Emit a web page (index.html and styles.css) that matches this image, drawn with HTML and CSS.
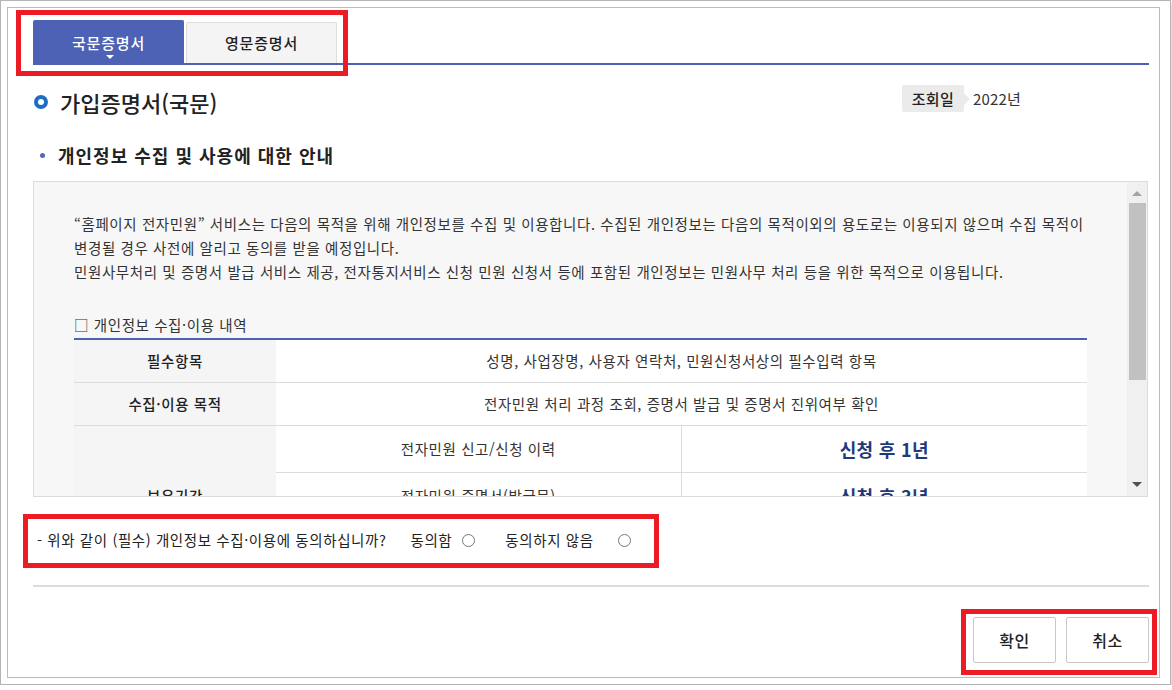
FILE: index.html
```html
<!DOCTYPE html>
<html lang="ko">

<head>
    <meta charset="UTF-8">
    <meta name="viewport" content="width=device-width, initial-scale=1.0">
    <title>가입증명서</title>
    <link rel="stylesheet" href="styles.css">
</head>

<body>
    <div class="dialog">
        <div class="panel">
            <!-- 탭 -->
            <ul class="tabs">
                <li class="tab on">국문증명서</li>
                <li class="tab">영문증명서</li>
            </ul>

            <div class="title-row">
                <h2 class="doc-title"><span class="ring"></span>가입증명서(국문)</h2>
                <div class="query-date">
                    <span class="label">조회일</span>
                    <span class="value">2022년</span>
                </div>
            </div>

            <h3 class="sub-title">개인정보 수집 및 사용에 대한 안내</h3>

            <div class="scroll-box">
                <div class="scroll-inner">
                    <p class="desc">
                        “홈페이지 전자민원” 서비스는 다음의 목적을 위해 개인정보를 수집 및 이용합니다. 수집된 개인정보는 다음의 목적이외의 용도로는 이용되지 않으며 수집 목적이<br>
                        변경될 경우 사전에 알리고 동의를 받을 예정입니다.<br>
                        민원사무처리 및 증명서 발급 서비스 제공, 전자통지서비스 신청 민원 신청서 등에 포함된 개인정보는 민원사무 처리 등을 위한 목적으로 이용됩니다.
                    </p>
                    <p class="tbl-cap">□ 개인정보 수집·이용 내역</p>
                    <table class="info-tbl">
                        <colgroup>
                            <col class="c1">
                            <col class="c2">
                            <col class="c3">
                        </colgroup>
                        <tbody>
                            <tr>
                                <th>필수항목</th>
                                <td colspan="2">성명, 사업장명, 사용자 연락처, 민원신청서상의 필수입력 항목</td>
                            </tr>
                            <tr>
                                <th>수집·이용 목적</th>
                                <td colspan="2">전자민원 처리 과정 조회, 증명서 발급 및 증명서 진위여부 확인</td>
                            </tr>
                            <tr class="tall">
                                <th rowspan="3">보유기간</th>
                                <td>전자민원 신고/신청 이력</td>
                                <td class="period">신청 후 1년</td>
                            </tr>
                            <tr class="tall">
                                <td>전자민원 증명서(발급문)</td>
                                <td class="period">신청 후 3년</td>
                            </tr>
                            <tr class="tall">
                                <td>전자민원 처리 결과</td>
                                <td class="period">신청 후 5년</td>
                            </tr>
                        </tbody>
                    </table>
                </div>
                <div class="scrollbar">
                    <span class="arrow up"></span>
                    <span class="thumb"></span>
                    <span class="arrow down"></span>
                </div>
            </div>

            <div class="agree-row">
                <span class="question">- 위와 같이 (필수) 개인정보 수집·이용에 동의하십니까?</span>
                <label class="opt">동의함 <span class="radio"></span></label>
                <label class="opt opt-no">동의하지 않음 <span class="radio"></span></label>
            </div>

            <div class="line"></div>

            <div class="btns">
                <button class="btn">확인</button>
                <button class="btn">취소</button>
            </div>
        </div>

        <!-- 강조 표시 -->
        <span class="mark mark-tabs"></span>
        <span class="mark mark-agree"></span>
        <span class="mark mark-btns"></span>
    </div>
</body>

</html>
```

FILE: styles.css
```css
* {
    margin: 0;
    padding: 0;
    box-sizing: border-box;
}

body {
    font-family: "Noto Sans CJK KR", "Noto Sans", sans-serif;
    font-size: 14.5px;
    letter-spacing: 0.6px;
    color: #333;
    background: #fff;
}

ul {
    list-style: none;
}

.dialog {
    position: relative;
    width: 1171px;
    height: 685px;
    padding: 6px 10px 6px 6px;
    border: 1px solid #b4b4b4;
    background: #fff;
    box-shadow: 2px 3px 5px rgba(0, 0, 0, 0.18);
}

.panel {
    height: 100%;
    padding: 12px 10px 0 25px;
    border: 1px solid #bcbcbc;
}

/* 탭 */
.tabs {
    display: flex;
    gap: 2px;
    height: 45px;
    border-bottom: 2px solid #4d62b4;
    align-items: flex-end;
}

.tab {
    position: relative;
    width: 151px;
    height: 41px;
    display: flex;
    align-items: center;
    justify-content: center;
    padding-bottom: 2px;
    font-size: 15px;
    font-weight: 500;
    letter-spacing: 0.8px;
    color: #222;
    background: #f4f4f4;
    border: 1px solid #dcdcdc;
    border-bottom: 0;
    border-radius: 2px 2px 0 0;
}

.tab.on {
    height: 43px;
    color: #fff;
    background: #4d62b4;
    border-color: #4d62b4;
    padding-bottom: 0;
}

.tab.on::after {
    content: '';
    position: absolute;
    left: 72px;
    bottom: 4px;
    border-top: 4px solid #fff;
    border-left: 4px solid transparent;
    border-right: 4px solid transparent;
}

/* 제목 */
.title-row {
    display: flex;
    align-items: flex-start;
    padding-top: 20px;
}

.doc-title {
    display: flex;
    align-items: center;
    margin-top: 2px;
    font-size: 22px;
    line-height: 30px;
    font-weight: 500;
    letter-spacing: 0;
    color: #222;
}

.ring {
    flex-shrink: 0;
    width: 14px;
    height: 14px;
    margin: 0 12px 0 1px;
    border: 4px solid #1b6ec4;
    border-radius: 50%;
}

.query-date {
    display: flex;
    align-items: center;
    margin-left: auto;
    margin-right: 128px;
}

.query-date .label {
    position: relative;
    width: 62px;
    height: 27px;
    line-height: 27px;
    text-align: center;
    font-size: 15px;
    font-weight: 500;
    letter-spacing: 0.3px;
    color: #222;
    background: #ebebeb;
    border-radius: 2px;
}

.query-date .label::after {
    content: '';
    position: absolute;
    right: -6px;
    top: 8px;
    border-left: 6px solid #ebebeb;
    border-top: 6px solid transparent;
    border-bottom: 6px solid transparent;
}

.query-date .value {
    margin-left: 9px;
    font-size: 15px;
    letter-spacing: 0.2px;
    color: #333;
}

.sub-title {
    display: flex;
    align-items: center;
    margin-top: 25px;
    padding-left: 7px;
    font-size: 18px;
    line-height: 26px;
    font-weight: bold;
    letter-spacing: 1px;
    color: #222;
}

.sub-title::before {
    content: '';
    width: 5px;
    height: 5px;
    margin-right: 13px;
    border-radius: 50%;
    background: #5569b8;
}

/* 스크롤 박스 */
.scroll-box {
    display: flex;
    height: 316px;
    margin-top: 13px;
    margin-right: 1px;
    border: 1px solid #dcdcdc;
    background: #f7f7f7;
    overflow: hidden;
}

.scroll-inner {
    flex: 1;
    padding: 30px 40px 0 40px;
    overflow: hidden;
}

.desc {
    line-height: 24px;
    white-space: nowrap;
}

.tbl-cap {
    margin-top: 30px;
    line-height: 22px;
}

.info-tbl {
    width: 100%;
    margin-top: 2px;
    border-collapse: collapse;
    border-top: 2px solid #4d62b4;
    text-align: center;
}

.info-tbl .c1 {
    width: 202px;
}

.info-tbl .c2 {
    width: 405px;
}

.info-tbl th,
.info-tbl td {
    height: 43px;
    border-bottom: 1px solid #dcdcdc;
}

.info-tbl th {
    font-weight: 500;
    color: #222;
    background: #f5f5f5;
}

.info-tbl td {
    background: #fff;
}

.info-tbl tr.tall td {
    height: 47px;
}

.info-tbl td+td {
    border-left: 1px solid #dcdcdc;
}

.info-tbl td.period {
    font-size: 18px;
    font-weight: bold;
    letter-spacing: 0.3px;
    color: #1f3a7a;
}

.scrollbar {
    display: flex;
    flex-direction: column;
    align-items: center;
    width: 20px;
    background: #f0f0f0;
}

.arrow {
    width: 0;
    height: 0;
    border-left: 5px solid transparent;
    border-right: 5px solid transparent;
}

.arrow.up {
    margin-top: 9px;
    border-bottom: 5px solid #a3a3a3;
}

.arrow.down {
    margin-top: auto;
    margin-bottom: 9px;
    border-top: 5px solid #505050;
}

.thumb {
    width: 17px;
    height: 177px;
    margin-top: 7px;
    background: #c1c1c1;
}

/* 동의 */
.agree-row {
    display: flex;
    align-items: center;
    margin-top: 33px;
    padding-left: 4px;
    line-height: 20px;
    color: #222;
}

.opt {
    display: flex;
    align-items: center;
    margin-left: 24px;
}

.opt-no {
    margin-left: 30px;
}

.radio {
    width: 13px;
    height: 13px;
    margin-left: 10px;
    border: 1px solid #777;
    border-radius: 50%;
    background: #fff;
}

.opt-no .radio {
    margin-left: 24px;
}

.line {
    margin-top: 35px;
    border-top: 2px solid #dcdcdc;
}

.btns {
    display: flex;
    justify-content: flex-end;
    gap: 10px;
    margin-top: 30px;
}

.btn {
    width: 83px;
    height: 46px;
    font-family: inherit;
    font-size: 16px;
    font-weight: 500;
    letter-spacing: 0.5px;
    color: #222;
    background: #fff;
    border: 1px solid #c8c8c8;
    border-radius: 2px;
}

/* 빨간 강조 박스 */
.mark {
    position: absolute;
    border: 5px solid #ed1c24;
}

.mark-tabs {
    left: 15px;
    top: 9px;
    width: 332px;
    height: 66px;
}

.mark-agree {
    left: 22px;
    top: 513px;
    width: 636px;
    height: 54px;
}

.mark-btns {
    left: 960px;
    top: 608px;
    width: 196px;
    height: 66px;
}
```
